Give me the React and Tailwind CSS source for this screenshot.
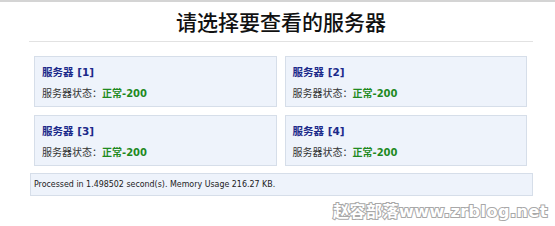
export default function App() {
  const servers = [1, 2, 3, 4];
  return (
    <div className="relative w-[555px] h-[226px] bg-white border-t-2 border-[#d4d4d4] overflow-hidden" style={{ fontFamily: '"DejaVu Sans", "Noto Sans CJK SC", sans-serif' }}>
      <div className="mx-[29px] w-[504px]">
        <div className="h-[40px] flex items-center justify-center border-b border-[#e2e2e2] text-[21px] font-medium text-[#111] font-['Noto_Sans_CJK_SC',sans-serif] leading-none">
          请选择要查看的服务器
        </div>
        <div className="grid grid-cols-2 gap-x-[8px] gap-y-[8px] pl-[5px] pr-[6px] pt-[14px]">
          {servers.map((n) => (
            <div key={n} className="h-[51px] bg-[#eef3fb] border border-[#d6dee9] pl-[7px] pt-[8px]">
              <div className="text-[10.5px] leading-[14px] font-bold text-[#1c2a8a]">
                <span className="font-['Noto_Sans_CJK_SC',sans-serif]">服务器</span> [{n}]
              </div>
              <div className="mt-[7px] text-[10px] leading-[14px] text-[#333]">
                <span className="font-['Noto_Sans_CJK_SC',sans-serif]">服务器状态：</span>
                <span className="font-bold text-[#1f8a1f]"><span className="font-['Noto_Sans_CJK_SC',sans-serif]">正常</span>-200</span>
              </div>
            </div>
          ))}
        </div>
        <div className="mt-[7px] ml-[1px] h-[23px] bg-[#eef3fb] border border-[#d6dee9] flex items-center pl-[3px] text-[8.8px] text-[#222] font-['DejaVu_Sans_Condensed','DejaVu_Sans',sans-serif]">
          Processed in 1.498502 second(s). Memory Usage 216.27 KB.
        </div>
      </div>
      <div className="absolute left-[333px] top-[200px] text-[16px] leading-none font-bold text-white whitespace-nowrap [-webkit-text-stroke:2px_#a8a8a8] [paint-order:stroke_fill] tracking-[0.5px]">
        <span className="font-['Noto_Sans_CJK_SC',sans-serif]">赵容部落</span>www.zrblog.net
      </div>
    </div>
  );
}
